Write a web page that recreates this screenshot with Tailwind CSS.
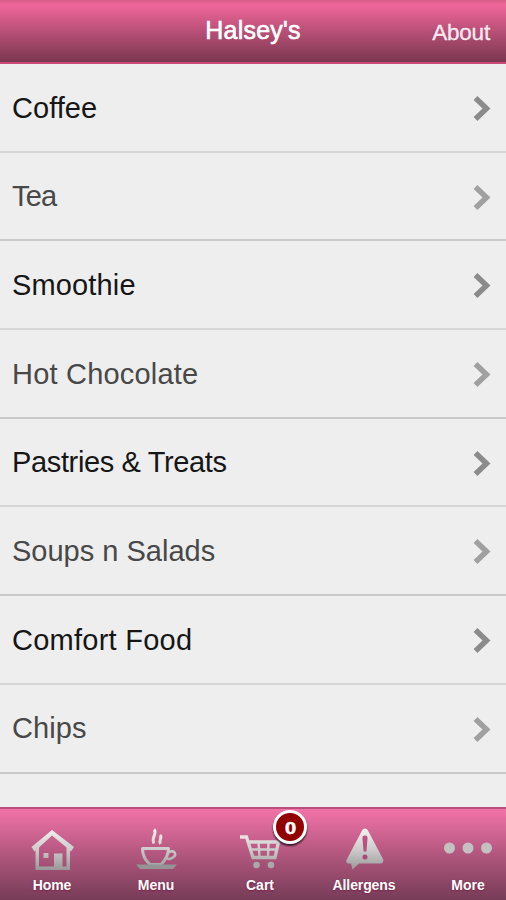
<!DOCTYPE html>
<html lang="en">
  <head>
    <meta charset="UTF-8" />
    <meta name="viewport" content="width=device-width, initial-scale=1.0" />
    <title>Halsey's</title>
    <script src="https://cdn.jsdelivr.net/npm/@tailwindcss/browser@4"></script>
  </head>
  <body class="bg-[#eeeeee] font-['Liberation_Sans',Arial,sans-serif]">
    <svg class="absolute w-0 h-0">
      <defs>
        <linearGradient id="silver" gradientUnits="userSpaceOnUse" x1="0" y1="0" x2="0" y2="44">
          <stop offset="0" stop-color="#f4f2f3" />
          <stop offset="0.5" stop-color="#cccacb" />
          <stop offset="1" stop-color="#949294" />
        </linearGradient>
      </defs>
    </svg>
    <div class="w-[506px] h-[900px] flex flex-col overflow-hidden">
      <header
        class="h-16 shrink-0 grid grid-cols-[1fr_auto_1fr] items-center px-4 text-white border-b-2 border-[#c94a76] bg-linear-to-b from-[#d95c89] from-0% via-[#f0669a] via-8% to-[#7b3750]"
      >
        <span></span>
        <h1 class="pb-[3px] text-[25px] leading-7 tracking-[0.2px] [-webkit-text-stroke:0.6px_white]">Halsey's</h1>
        <a class="pt-[3px] text-[22.5px] leading-7 text-right tracking-[-0.2px] text-[#fbeaf1] [-webkit-text-stroke:0.3px_#fbeaf1]">About</a>
      </header>

      <main class="flex-1 min-h-0 overflow-hidden text-[29px] *:h-[88.7px] *:flex *:items-center *:justify-between *:pl-3 *:pt-[2px] *:pr-[15px] *:border-b-2 *:odd:border-[#d6d6d6] *:even:border-[#c9c9c9]">
        <div class="text-[#161616]">
          <span class="tracking-[0.05px]">Coffee</span>
          <svg class="w-[18px] h-[27px]" viewBox="0 0 18 27"><path d="M2.500 3 13.500 13.500 2.500 24" fill="none" stroke="#8b8b8b" stroke-width="5.500" /></svg>
        </div>
        <div class="text-[#484848]">
          <span class="tracking-[-0.8px]">Tea</span>
          <svg class="w-[18px] h-[27px]" viewBox="0 0 18 27"><path d="M2.500 3 13.500 13.500 2.500 24" fill="none" stroke="#a0a0a0" stroke-width="5.500" /></svg>
        </div>
        <div class="text-[#161616]">
          <span class="tracking-[0.15px]">Smoothie</span>
          <svg class="w-[18px] h-[27px]" viewBox="0 0 18 27"><path d="M2.500 3 13.500 13.500 2.500 24" fill="none" stroke="#8b8b8b" stroke-width="5.500" /></svg>
        </div>
        <div class="text-[#484848]">
          <span class="tracking-[0.2px]">Hot Chocolate</span>
          <svg class="w-[18px] h-[27px]" viewBox="0 0 18 27"><path d="M2.500 3 13.500 13.500 2.500 24" fill="none" stroke="#a0a0a0" stroke-width="5.500" /></svg>
        </div>
        <div class="text-[#161616]">
          <span class="tracking-[-0.36px]">Pastries &amp; Treats</span>
          <svg class="w-[18px] h-[27px]" viewBox="0 0 18 27"><path d="M2.500 3 13.500 13.500 2.500 24" fill="none" stroke="#8b8b8b" stroke-width="5.500" /></svg>
        </div>
        <div class="text-[#484848]">
          <span>Soups n Salads</span>
          <svg class="w-[18px] h-[27px]" viewBox="0 0 18 27"><path d="M2.500 3 13.500 13.500 2.500 24" fill="none" stroke="#a0a0a0" stroke-width="5.500" /></svg>
        </div>
        <div class="text-[#161616]">
          <span class="tracking-[0.25px]">Comfort Food</span>
          <svg class="w-[18px] h-[27px]" viewBox="0 0 18 27"><path d="M2.500 3 13.500 13.500 2.500 24" fill="none" stroke="#8b8b8b" stroke-width="5.500" /></svg>
        </div>
        <div class="text-[#484848]">
          <span class="tracking-[0.1px]">Chips</span>
          <svg class="w-[18px] h-[27px]" viewBox="0 0 18 27"><path d="M2.500 3 13.500 13.500 2.500 24" fill="none" stroke="#a0a0a0" stroke-width="5.500" /></svg>
        </div>
      </main>

      <nav
        class="h-[93px] shrink-0 flex border-t-2 border-[#b94f7b] bg-linear-to-b from-[#f273a8] to-[#763c57] text-white text-[14px] font-bold *:w-[104px] *:shrink-0 *:flex *:flex-col *:items-center *:gap-[5px] *:pt-[19px]"
      >
        <a>
          <svg class="w-12 h-11" viewBox="0 0 48 44" fill="url(#silver)">
            <path d="M24 2 3.500 19 6.500 23.500 7.500 22.500V42H42V22.500L43 23.500 46 19Z M24 7.500 38.500 19.500V38.500H34.500V25.500H26V38.500H11V19.500Z" fill-rule="evenodd" />
            <rect x="15.500" y="25" width="5" height="5" />
          </svg>
          <span class="leading-4 tracking-[-0.1px] [text-shadow:0_1px_2px_#7a1f4a]">Home</span>
        </a>
        <a>
          <svg class="w-12 h-11" viewBox="0 0 48 44">
            <path d="M22 1.500C26 5 18.500 10 22 15.500M28 7C31 10 26 12 28.500 16" fill="none" stroke="url(#silver)" stroke-width="3" />
            <path d="M10.500 20.500H36.500C36.500 28 32.500 33 29 36.500H18C14 33 10.500 28 10.500 20.500Z" fill="none" stroke="url(#silver)" stroke-width="3" stroke-linejoin="round" />
            <path d="M37 24C43 21.500 45 27 41 29.500 39 31 36 31 34.500 30.500" fill="none" stroke="url(#silver)" stroke-width="2.500" />
            <path d="M4 36.500H45L41 41H8Z" fill="#959395" />
          </svg>
          <span class="leading-4 [text-shadow:0_1px_2px_#7a1f4a]">Menu</span>
        </a>
        <a class="relative">
          <svg class="w-12 h-11" viewBox="0 0 48 44" fill="none">
            <path d="M4 9H10.500L17 29.500H39L42.500 14H12.500" stroke="url(#silver)" stroke-width="3.300" />
            <path d="M14 21.500H41M22.500 14 23.500 29M32.500 14 32 29" stroke="url(#silver)" stroke-width="2.400" />
            <circle cx="20.500" cy="37" r="3.300" fill="#aaa8aa" />
            <circle cx="35" cy="37" r="3.300" fill="#aaa8aa" />
          </svg>
          <span class="leading-4 [text-shadow:0_1px_2px_#7a1f4a]">Cart</span>
          <span
            class="absolute top-px left-[65px] size-[34px] rounded-full border-[3px] border-white bg-[#930000] flex items-center justify-center pt-[3px] text-[16px] shadow-[0_2px_2px_#3a1728]"
          ><span class="scale-x-125 [-webkit-text-stroke:0.5px_white]">0</span></span>
        </a>
        <a>
          <svg class="w-12 h-11" viewBox="0 0 48 44">
            <path d="M25 0.500C26.500 0.500 27.500 1.500 28.200 3L43 31C44 34 42.500 35.500 40.500 35.500H19L12.500 41.500 11 35.500H9C6.500 35.500 5.500 33.500 7 31L21.800 3C22.500 1.500 23.500 0.500 25 0.500Z" fill="url(#silver)" />
            <path d="M25 7.500C27 7.500 27.700 8.500 27.500 10.500L26.500 23.500H23.500L22.500 10.500C22.300 8.500 23 7.500 25 7.500Z" fill="#ba527f" />
            <circle cx="25" cy="29" r="2.500" fill="#a84a73" />
          </svg>
          <span class="leading-4 tracking-[-0.1px] [text-shadow:0_1px_2px_#7a1f4a]">Allergens</span>
        </a>
        <a>
          <svg class="w-12 h-11" viewBox="0 0 48 44" fill="#c4c1c3">
            <circle cx="5.500" cy="20" r="5.500" />
            <circle cx="24" cy="20" r="5.500" />
            <circle cx="42.500" cy="20" r="5.500" />
          </svg>
          <span class="leading-4 [text-shadow:0_1px_2px_#7a1f4a]">More</span>
        </a>
      </nav>
    </div>
  </body>
</html>
